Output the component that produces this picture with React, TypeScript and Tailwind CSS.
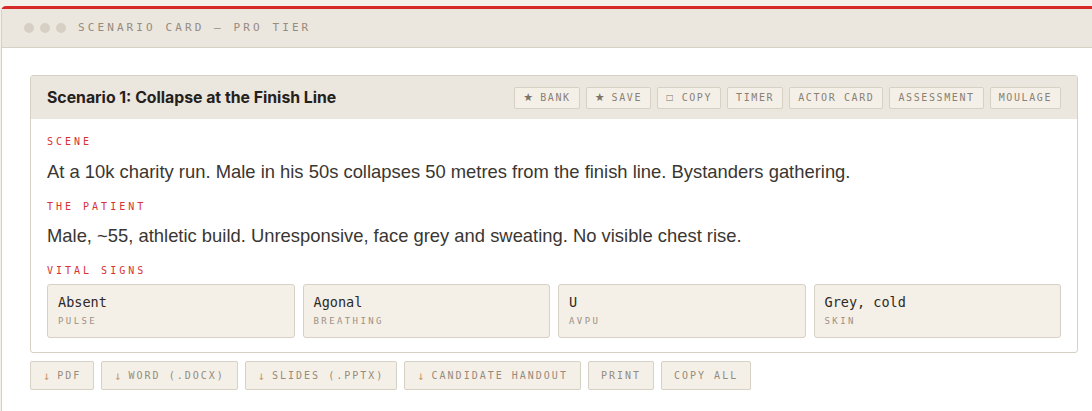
import React from "react";

const mono = { fontFamily: '"DejaVu Sans Mono", "Liberation Mono", monospace' };

function HeadBtn({ icon, label, small }: { icon?: string; label: string; small?: boolean }) {
  return (
    <button
      className="h-[22px] px-2 border border-[#d6d0c5] rounded-[2px] bg-[#f4f0e8] text-[10px] tracking-[1.6px] text-[#8a8174] flex items-center leading-none"
      style={mono}
    >
      {icon && (
        <span
          className={
            small
              ? "text-[8px] mr-[8px] text-[#7d7468] tracking-normal"
              : "text-[11px] mr-[7px] text-[#7d7468] tracking-normal"
          }
          style={{ fontFamily: '"DejaVu Sans", sans-serif' }}
        >
          {icon}
        </span>
      )}
      {label}
    </button>
  );
}

function FootBtn({ arrow, label }: { arrow?: boolean; label: string }) {
  return (
    <button
      className="h-[29px] px-3 border border-[#d6d0c5] rounded-[2px] bg-[#f4f0e8] text-[10px] tracking-[2px] text-[#968b7c] flex items-center leading-none"
      style={mono}
    >
      {arrow && <span className="text-[12px] text-[#c99a6e] mr-[7px] tracking-normal">↓</span>}
      {label}
    </button>
  );
}

function Label({ children }: { children: React.ReactNode }) {
  return (
    <div className="text-[10px] leading-[12px] tracking-[3px] text-[#d63333]" style={mono}>
      {children}
    </div>
  );
}

function Vital({ value, label }: { value: string; label: string }) {
  return (
    <div className="border border-[#d6d0c5] rounded-[3px] bg-[#f4efe7] pl-[10px] pt-[8px] pb-[10px]">
      <div className="text-[13.5px] leading-[18px] text-[#2c2925]" style={mono}>
        {value}
      </div>
      <div className="mt-1 text-[9px] leading-[12px] tracking-[2.4px] text-[#9c9284]" style={mono}>
        {label}
      </div>
    </div>
  );
}

export default function App() {
  return (
    <div className="w-full min-h-[411px] bg-[#f4f0ea] overflow-hidden pt-[6px]">
      <div className="ml-[1px] w-[1105px] min-h-[420px] bg-white border-l border-[#d6d0c5] border-t-[3px] border-t-[#d62a2a] rounded-tl-[5px]">
        <div className="h-[39px] bg-[#ebe6de] border-b border-[#d6d0c5] flex items-center pl-[22px]">
          <div className="flex gap-[6px]">
            <span className="w-[10px] h-[10px] rounded-full bg-[#d6d0c4]" />
            <span className="w-[10px] h-[10px] rounded-full bg-[#d6d0c4]" />
            <span className="w-[10px] h-[10px] rounded-full bg-[#d6d0c4]" />
          </div>
          <div className="ml-[12px] text-[11px] tracking-[3.1px] text-[#958b7e]" style={mono}>
            SCENARIO CARD — PRO TIER
          </div>
        </div>

        <div className="pl-[28px] pr-[28px] pt-[27px]">
          <div className="border border-[#d6d0c5] rounded-[3px]">
            <div className="h-[43px] bg-[#ebe6de] flex items-center justify-between px-4">
              <div
                className="text-[15.8px] font-bold text-[#24211d]"
                style={{ fontFamily: 'Inter, "Noto Sans", sans-serif' }}
              >
                Scenario 1: Collapse at the Finish Line
              </div>
              <div className="flex gap-[6px]">
                <HeadBtn icon="★" label="BANK" />
                <HeadBtn icon="★" label="SAVE" />
                <HeadBtn icon="□" label="COPY" small />
                <HeadBtn label="TIMER" />
                <HeadBtn label="ACTOR CARD" />
                <HeadBtn label="ASSESSMENT" />
                <HeadBtn label="MOULAGE" />
              </div>
            </div>
            <div
              className="px-4 pt-[17px] pb-[14px]"
              style={{ fontFamily: '"Liberation Sans", Arial, sans-serif' }}
            >
              <Label>SCENE</Label>
              <p className="mt-[11px] text-[18.4px] leading-[26px] text-[#3a3631]">
                At a 10k charity run. Male in his 50s collapses 50 metres from the finish line. Bystanders gathering.
              </p>
              <div className="mt-[16px]">
                <Label>THE PATIENT</Label>
              </div>
              <p className="mt-[10px] text-[18.4px] leading-[26px] text-[#3a3631]">
                Male, ~55, athletic build. Unresponsive, face grey and sweating. No visible chest rise.
              </p>
              <div className="mt-[16px]">
                <Label>VITAL SIGNS</Label>
              </div>
              <div className="mt-[7px] grid grid-cols-4 gap-2">
                <Vital value="Absent" label="PULSE" />
                <Vital value="Agonal" label="BREATHING" />
                <Vital value="U" label="AVPU" />
                <Vital value="Grey, cold" label="SKIN" />
              </div>
            </div>
          </div>

          <div className="mt-[8px] flex gap-[7px]">
            <FootBtn arrow label="PDF" />
            <FootBtn arrow label="WORD (.DOCX)" />
            <FootBtn arrow label="SLIDES (.PPTX)" />
            <FootBtn arrow label="CANDIDATE HANDOUT" />
            <FootBtn label="PRINT" />
            <FootBtn label="COPY ALL" />
          </div>
        </div>
      </div>
    </div>
  );
}
